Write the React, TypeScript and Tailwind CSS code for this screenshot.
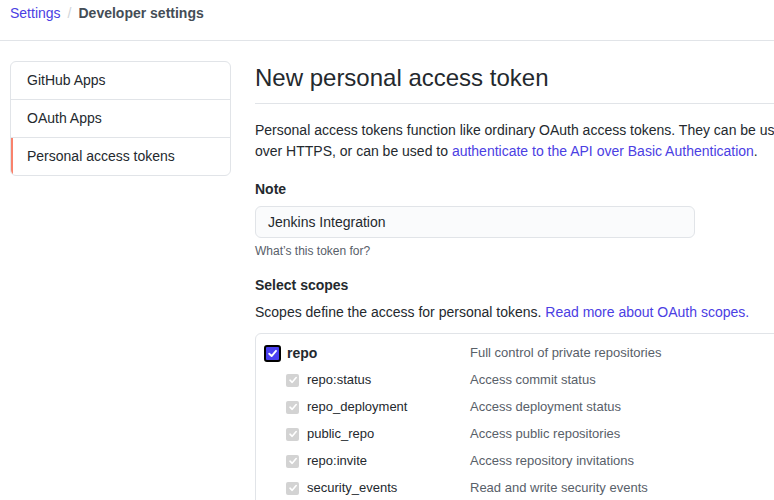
import React from "react";

const scopes = [
  { name: "repo:status", desc: "Access commit status" },
  { name: "repo_deployment", desc: "Access deployment status" },
  { name: "public_repo", desc: "Access public repositories" },
  { name: "repo:invite", desc: "Access repository invitations" },
  { name: "security_events", desc: "Read and write security events" },
];

function DisabledCheck() {
  return (
    <span className="flex h-[13px] w-[13px] items-center justify-center rounded-[2px] bg-[#d3d3d3]">
      <svg width="10" height="10" viewBox="0 0 10 10">
        <path d="M2 5.2 L4.2 7.3 L8.2 2.6" stroke="#fff" strokeWidth="1.6" fill="none" strokeLinecap="round" strokeLinejoin="round" />
      </svg>
    </span>
  );
}

export default function App() {
  return (
    <div
      className="h-[500px] w-[774px] overflow-hidden bg-white text-[14px] text-[#24292e]"
      style={{ fontFamily: '"Liberation Sans", Arial, sans-serif' }}
    >
      <div className="flex h-[41px] items-start border-b border-[#e1e4e8] pl-[10px] pt-[3px] text-[14px] leading-[20px]">
        <span className="text-[#4b40e3]">Settings</span>
        <span className="mx-[7px] text-[#d1d5da]">/</span>
        <span className="font-bold text-[#444d56]">Developer settings</span>
      </div>
      <div className="flex gap-[24px] pl-[10px] pt-[20px]">
        <div className="w-[221px] shrink-0">
          <div className="overflow-hidden rounded-[6px] border border-[#e1e4e8]">
            <div className="flex h-[38px] items-center border-b border-[#e1e4e8] pl-[16px]">GitHub Apps</div>
            <div className="flex h-[38px] items-center border-b border-[#e1e4e8] pl-[16px]">OAuth Apps</div>
            <div className="flex h-[37px] items-center border-l-2 border-[#f9826c] pl-[14px]">Personal access tokens</div>
          </div>
        </div>
        <div className="w-[760px] shrink-0">
          <div className="border-b border-[#e1e4e8] pb-[8px]">
            <h1 className="text-[24px] font-normal leading-[34px]">New personal access token</h1>
          </div>
          <p className="mt-[16px] leading-[21px]">
            Personal access tokens function like ordinary OAuth access tokens. They can be used instead of a password for Git
            <br />
            over HTTPS, or can be used to <span className="text-[#4b40e3]">authenticate to the API over Basic Authentication</span>.
          </p>
          <div className="mt-[17px] font-bold leading-[20px]">Note</div>
          <div className="mt-[7px] flex h-[32px] w-[440px] items-center rounded-[6px] border border-[#e1e4e8] bg-[#fafbfc] px-[12px]">
            Jenkins Integration
          </div>
          <div className="mt-[4px] text-[12px] leading-[18px] text-[#586069]">What’s this token for?</div>
          <div className="mt-[15px] font-bold leading-[20px]">Select scopes</div>
          <p className="mt-[7px] leading-[20px]">
            Scopes define the access for personal tokens. <span className="text-[#4b40e3]">Read more about OAuth scopes.</span>
          </p>
          <div className="mt-[11px] rounded-[6px] border border-[#e1e4e8] pb-[20px] pt-[8px]">
            <div className="flex h-[22px] items-center">
              <div className="flex w-[214px] items-center pl-[8px]">
                <span className="flex h-[17px] w-[17px] items-center justify-center rounded-[3px] border-2 border-black bg-[#4b40f0]">
                  <svg width="11" height="11" viewBox="0 0 10 10">
                    <path d="M2 5.2 L4.2 7.3 L8.2 2.6" stroke="#fff" strokeWidth="1.7" fill="none" strokeLinecap="round" strokeLinejoin="round" />
                  </svg>
                </span>
                <span className="ml-[6px] font-bold">repo</span>
              </div>
              <span className="text-[13px] text-[#586069]">Full control of private repositories</span>
            </div>
            {scopes.map((s) => (
              <div key={s.name} className="mt-[5px] flex h-[22px] items-center">
                <div className="flex w-[214px] items-center pl-[30px]">
                  <DisabledCheck />
                  <span className="ml-[8px] text-[13px]">{s.name}</span>
                </div>
                <span className="text-[13px] text-[#586069]">{s.desc}</span>
              </div>
            ))}
          </div>
        </div>
      </div>
    </div>
  );
}
